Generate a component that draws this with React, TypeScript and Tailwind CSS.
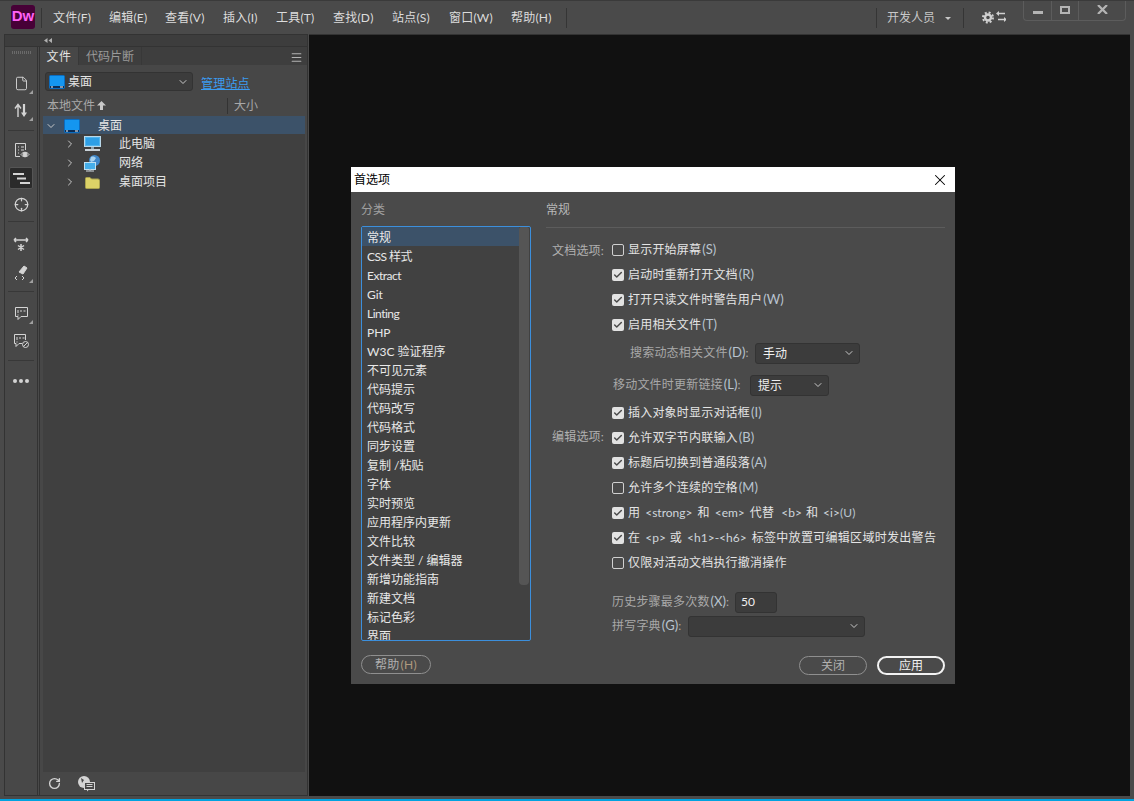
import { ChevronDown, ChevronRight, Menu, RotateCw, Check, X, Crosshair, File } from "lucide-react";

const FONT = "font-['Lato','Noto_Sans_CJK_SC',sans-serif]";
const menus: [string, string][] = [["文件(F)", "w-[56px]"], ["编辑(E)", "w-[56px]"], ["查看(V)", "w-[58px]"], ["插入(I)", "w-[53px]"], ["工具(T)", "w-[57px]"], ["查找(D)", "w-[59px]"], ["站点(S)", "w-[57px]"], ["窗口(W)", "w-[62px]"], ["帮助(H)", "w-[55px]"]];
const cats = ["常规", "CSS 样式", "Extract", "Git", "Linting", "PHP", "W3C 验证程序", "不可见元素", "代码提示", "代码改写", "代码格式", "同步设置", "复制 /粘贴", "字体", "实时预览", "应用程序内更新", "文件比较", "文件类型 / 编辑器", "新增功能指南", "新建文档", "标记色彩", "界面"];
const narrow = ["Extract", "Linting", "CSS 样式"];

function Corner() {
  return <span className="absolute right-0 bottom-0 w-0 h-0 border-l-[4px] border-b-[4px] border-l-transparent border-b-[#a0a0a0]" />;
}

function Tool({ children, corner, active }: { children: React.ReactNode; corner?: boolean; active?: boolean }) {
  return (
    <div className={`relative w-[24px] h-[22px] flex items-center justify-center rounded-[2px] text-[#d4d4d4] ${active ? "bg-[#2b2b2b] border border-[#555]" : ""}`}>
      {children}
      {corner && <Corner />}
    </div>
  );
}

function Desktop() {
  return (
    <svg width="16" height="14" viewBox="0 0 16 14">
      <rect x="0.5" y="0.5" width="15" height="13" rx="1" fill="#1496f0" stroke="#0b6cc0" />
      <rect x="1" y="11" width="14" height="2" fill="#0b2d55" />
      <rect x="2" y="11.5" width="2" height="1" fill="#fff" />
      <rect x="11" y="11.5" width="3" height="1" fill="#fff" />
    </svg>
  );
}

function Computer() {
  return (
    <svg width="17" height="16" viewBox="0 0 17 16">
      <rect x="0.5" y="0.5" width="16" height="10" fill="#4fb4ee" stroke="#b9d8ea" />
      <rect x="2" y="2" width="13" height="7" fill="#2e9fe6" />
      <rect x="7" y="11" width="3" height="2" fill="#8fa3b0" />
      <rect x="1" y="13" width="15" height="2" fill="#c9d2d8" />
    </svg>
  );
}

function Network() {
  return (
    <svg width="17" height="17" viewBox="0 0 17 17">
      <circle cx="10.5" cy="5.5" r="5.5" fill="#3f86c8" />
      <path d="M7 2c2-1 4 0 5 1l-2 3-3 1-1-2z" fill="#a8d3f0" />
      <rect x="0.5" y="7.5" width="11" height="7" fill="#45aeea" stroke="#bfe0f2" />
      <rect x="5" y="14.5" width="2" height="1" fill="#9fb2bf" />
      <rect x="2" y="15.5" width="8" height="1" fill="#d0d8dd" />
    </svg>
  );
}

function Folder() {
  return (
    <svg width="15" height="13" viewBox="0 0 15 13">
      <path d="M0.5 2.5a1 1 0 0 1 1-1H5l1.5 1.5h6.5a1.5 1.5 0 0 1 1.5 1.5v7a1 1 0 0 1-1 1h-12a1 1 0 0 1-1-1z" fill="#dcd267" stroke="#a9a24e" />
    </svg>
  );
}

function ArrowUp10() {
  return (
    <svg className="ml-[2px]" width="9" height="9" viewBox="0 0 9 9" fill="#c8c8c8"><path d="M4.5 0L9 4.5H6V9H3V4.5H0z" /></svg>
  );
}

function CheckRow({ checked, children, className = "" }: { checked: boolean; children: React.ReactNode; className?: string }) {
  return (
    <div className={`flex items-center h-[25px] ${className}`}>
      <span className={`w-[12px] h-[12px] rounded-[2px] flex items-center justify-center shrink-0 ${checked ? "bg-[#e2e2e2]" : "border border-[#d0d0d0]"}`}>
        {checked && <Check size={10} strokeWidth={3.5} className="text-[#4a4a4a]" />}
      </span>
      <span className="ml-[4px] text-[#e4e4e4] whitespace-nowrap tracking-[0.2px]">{children}</span>
    </div>
  );
}

function Hot({ k }: { k: string }) {
  return <span className="ml-[1px] text-[13px] leading-none tracking-normal text-[#b9c4cf]">({k})</span>;
}

function Tag({ children, className = "" }: { children: React.ReactNode; className?: string }) {
  return <span className={`text-[#cfd6dc] tracking-[0px] ${className}`}>{children}</span>;
}

function Select({ value, className }: { value: string; className: string }) {
  return (
    <div className={`h-[21px] rounded-[3px] bg-[#3c3c3c] border border-[#333] flex items-center justify-between pl-[7px] pr-[4px] text-[#f0f0f0] ${className}`}>
      <span className="pt-[2px]">{value}</span>
      <ChevronDown size={12} className="text-[#c8c8c8]" />
    </div>
  );
}

function Pill({ children, primary }: { children: React.ReactNode; primary?: boolean }) {
  return (
    <div className={`w-[68px] h-[19px] rounded-full flex items-center justify-center ${primary ? "border-2 border-[#f2f2f2] text-[#f2f2f2]" : "border border-[#8f8f8f] text-[#b0b0b0]"}`}>
      {children}
    </div>
  );
}

export default function App() {
  return (
    <div className={`relative w-[1134px] h-[801px] overflow-hidden bg-[#4a4a4a] text-[12px] flex flex-col ${FONT}`}>
      {/* title bar */}
      <div className="h-[34px] shrink-0 flex items-center border-t border-[#3a3a3a] relative">
        <div className="ml-[11px] mb-[2px] w-[24px] h-[24px] rounded-[3px] bg-[#470137] flex items-center justify-center text-[#ff61f6] font-bold text-[15px] font-['Liberation_Sans',sans-serif]">Dw</div>
        <div className="ml-[6px] w-px h-[20px] bg-[#353535]" />
        <div className="ml-[11px] flex text-[#dcdcdc]">
          {menus.map(([m, w]) => <span key={m} className={`${w} whitespace-nowrap tracking-[0.2px]`}>{m}</span>)}
        </div>
        <div className="w-px h-[20px] bg-[#353535]" />
        <div className="ml-[309px] w-px h-[20px] bg-[#353535]" />
        <span className="ml-[10px] text-[#c8c8c8] whitespace-nowrap">开发人员</span>
        <span className="ml-[10px] mt-[2px] w-0 h-0 border-x-[3px] border-t-[3px] border-x-transparent border-t-[#c8c8c8]" />
        <div className="ml-[12px] w-px h-[20px] bg-[#353535]" />
        <div className="ml-[18px] text-[#d0d0d0]">
          <svg width="24" height="13" viewBox="0 0 24 13" fill="none" stroke="currentColor">
            <circle cx="6" cy="6.5" r="3" strokeWidth="2.4" />
            <circle cx="6" cy="6.5" r="5" strokeWidth="2" strokeDasharray="2 1.93" />
            <path d="M16 2.5h7M23 8.5h-7" strokeWidth="1.5" />
            <path d="M17 0v5l-3-2.5zM22 6v5l3-2.5z" fill="currentColor" stroke="none" />
          </svg>
        </div>
        <div className="absolute top-0 left-[1023px] w-[103px] h-[20px] border border-t-0 border-[#5c5c5c] rounded-b-[4px] flex text-[#b4b4b4]">
          <div className="w-[28px] flex items-center justify-center border-r border-[#5c5c5c]"><span className="w-[10px] h-[3px] mt-[4px] bg-[#b4b4b4]" /></div>
          <div className="w-[27px] flex items-center justify-center border-r border-[#5c5c5c]"><span className="w-[10px] h-[8px] mb-[2px] border-2 border-[#b4b4b4]" /></div>
          <div className="flex-1 flex items-center justify-center">
            <svg width="11" height="9" viewBox="0 0 11 9" className="mb-[2px]" stroke="currentColor" strokeWidth="2.2"><path d="M1 0l9 9M10 0l-9 9" /></svg>
          </div>
        </div>
      </div>

      {/* body */}
      <div className="flex-1 flex min-h-0 pl-[4px] pr-[4px] pb-[3px]">
        <div className="w-[304px] shrink-0 flex flex-col border border-[#333]">
          <div className="h-[12px] shrink-0 bg-[#3d3d3d] border-b border-[#333] pl-[39px] flex items-center">
            <svg width="8" height="5" viewBox="0 0 8 5" fill="#b0b0b0"><path d="M3.5 0v5L0 2.5zM8 0v5L4.5 2.5z" /></svg>
          </div>
          <div className="flex-1 flex min-h-0">
            {/* toolbar */}
            <div className="w-[33px] shrink-0 bg-[#484848] border-r border-[#333] flex flex-col items-center pt-[4px]">
              <div className="w-[19px] h-[3px] bg-[repeating-linear-gradient(90deg,#6a6a6a_0,#6a6a6a_1px,transparent_1px,transparent_2px)]" />
              <div className="mt-[18px] flex flex-col items-center gap-[5px]">
                <Tool corner><File size={15} strokeWidth={1.5} /></Tool>
                <Tool corner>
                  <svg width="14" height="15" viewBox="0 0 14 15" fill="none" stroke="currentColor"><path d="M4 14V3M1 5.5l3-4 3 4" strokeWidth="1.4" /><path d="M10 1v11" strokeWidth="2.2" /><path d="M7 9.5h6l-3 4.5z" fill="currentColor" stroke="none" /></svg>
                </Tool>
              </div>
              <div className="mt-[9px] w-[26px] h-px bg-[#383838]" />
              <div className="mt-[8px] flex flex-col items-center gap-[6px]">
                <Tool>
                  <svg width="17" height="17" viewBox="0 0 17 17" fill="none" stroke="currentColor"><path d="M12.5 8V1.5h-10v13H7" /><path d="M5 5h1M8 5h3M5 8h1M8 8h3M5 11h1" /><circle cx="12" cy="12.5" r="2" fill="currentColor" /><path d="M8 12.5c2-3 6-3 8 0-2 3-6 3-8 0z" /></svg>
                </Tool>
                <Tool active>
                  <svg width="17" height="13" viewBox="0 0 17 13" fill="currentColor"><rect x="0" y="1" width="11" height="2" /><rect x="4" y="5.5" width="9" height="2" /><rect x="7" y="10" width="10" height="2" /></svg>
                </Tool>
                <div className="-mt-[2px]"><Tool><Crosshair size={15} /></Tool></div>
              </div>
              <div className="mt-[6px] w-[26px] h-px bg-[#383838]" />
              <div className="mt-[11px] flex flex-col items-center gap-[7px]">
                <Tool>
                  <svg width="16" height="16" viewBox="0 0 16 16" fill="none" stroke="currentColor" strokeWidth="1.5"><path d="M1 4h14M1 4l2-2M1 4l2 2M15 4l-2-2M15 4l-2 2" /><path d="M8 8v7M5 9.5l6 4M11 9.5l-6 4" /></svg>
                </Tool>
                <div className="-mt-[1px]"><Tool corner>
                  <svg width="16" height="17" viewBox="0 0 16 17" fill="none" stroke="currentColor"><path d="M6 8l5-6 3 2-4 6z" fill="currentColor" /><path d="M4 12l-2 2 2 2M9 12l2 2-2 2" /></svg>
                </Tool></div>
              </div>
              <div className="mt-[8px] w-[26px] h-px bg-[#383838]" />
              <div className="mt-[10px] flex flex-col items-center gap-[6px]">
                <Tool corner>
                  <svg width="15" height="15" viewBox="0 0 15 15" fill="none" stroke="currentColor"><path d="M1.5 1.5h12v9H7l-3 3v-3H1.5z" /><path d="M4 4v3M4 8.5v1M6 5h2M9.5 5h2" /></svg>
                </Tool>
                <Tool>
                  <svg width="17" height="16" viewBox="0 0 17 16" fill="none" stroke="currentColor"><path d="M9 10.5H6l-3 3v-3H1.5v-9h11V7" /><path d="M4 4v3M4 8.5v1M6 5h2M9.5 5h2" /><circle cx="12.5" cy="11.5" r="3" /><path d="M10.5 13.5l4-4" /></svg>
                </Tool>
              </div>
              <div className="mt-[8px] w-[26px] h-px bg-[#383838]" />
              <div className="mt-[18px] flex gap-[2px]">
                <span className="w-[4px] h-[4px] rounded-full bg-[#d4d4d4]" />
                <span className="w-[4px] h-[4px] rounded-full bg-[#d4d4d4]" />
                <span className="w-[4px] h-[4px] rounded-full bg-[#d4d4d4]" />
              </div>
            </div>
            {/* panel */}
            <div className="ml-[1px] flex-1 flex flex-col min-w-0 bg-[#474747] border-l border-[#333]">
              <div className="h-[18px] shrink-0 flex bg-[#3e3e3e] items-center">
                <div className="w-[39px] h-full bg-[#474747] pt-[2px] flex items-center justify-center text-[#e4e4e4] border-r border-[#383838] tracking-[0.6px]">文件</div>
                <div className="w-[63px] h-full pt-[2px] flex items-center justify-center text-[#9a9a9a] border-r border-[#383838]">代码片断</div>
                <div className="ml-auto mr-[4px] mt-[2px] text-[#b4b4b4]"><Menu size={13} /></div>
              </div>
              <div className="h-[26px] shrink-0 flex items-end pl-[5px]">
                <div className="w-[148px] h-[19px] rounded-[3px] bg-[#3c3c3c] border border-[#333] flex items-center pl-[3px] pr-[3px] text-[#e4e4e4]">
                  <Desktop />
                  <span className="ml-[3px]">桌面</span>
                  <ChevronDown size={12} className="ml-auto text-[#c8c8c8]" />
                </div>
                <span className="ml-[8px] mb-[-2px] text-[#3b9bf0] underline tracking-[0.2px]">管理站点</span>
              </div>
              <div className="h-[25px] pt-[4px] shrink-0 flex items-center pl-[7px] text-[#a8a8a8]">
                <span className="w-[180px] flex items-center">本地文件<ArrowUp10 /></span>
                <span className="w-px h-[16px] bg-[#333]" />
                <span className="ml-[6px]">大小</span>
              </div>
              <div className="flex-1 ml-[3px] mr-[2px] bg-[#404040] text-[#e4e4e4]">
                <div className="h-[18px] pt-[1px] bg-[#3c5269] flex items-center pl-[2px]">
                  <ChevronDown size={12} className="text-[#c8c8c8]" />
                  <span className="ml-[7px] flex"><Desktop /></span>
                  <span className="ml-[18px]">桌面</span>
                </div>
                {[["此电脑", <Computer key="c" />], ["网络", <Network key="n" />], ["桌面项目", <Folder key="f" />]].map(([t, ic], i) => (
                  <div key={i} className="h-[19px] pt-[1px] flex items-center pl-[21px]">
                    <ChevronRight size={12} className="text-[#c8c8c8]" />
                    <span className="ml-[8px] w-[17px] flex justify-center">{ic}</span>
                    <span className="ml-[18px]">{t}</span>
                  </div>
                ))}
              </div>
              <div className="h-[23px] shrink-0 flex items-center pl-[8px] text-[#d4d4d4]">
                <RotateCw size={13} strokeWidth={2.5} />
                <svg className="ml-[16px]" width="18" height="17" viewBox="0 0 18 17"><circle cx="7" cy="7" r="6" fill="#d4d4d4" /><path d="M4 3l3 2-2 3zM8 8l3 1-3 3z" fill="#474747" /><rect x="7.5" y="7.5" width="10" height="7" fill="#474747" stroke="#d4d4d4" /><path d="M9.5 9.5h6M9.5 11.5h6" stroke="#d4d4d4" /><path d="M10 14.5v2l2-2z" fill="#d4d4d4" /></svg>
              </div>
            </div>
          </div>
        </div>
        <div className="flex-1 bg-[#111111] border-t border-[#333] ml-[1px]" />
      </div>
      <div className="h-[2px] shrink-0 bg-[#00a3e0]" />

      {/* preferences dialog */}
      <div className="absolute left-[351px] top-[167px] w-[604px] h-[517px] bg-[#4a4a4a] flex flex-col">
        <div className="h-[25px] shrink-0 bg-white flex items-center pl-[3px] text-black">
          <span>首选项</span>
          <X size={18} strokeWidth={1.4} className="ml-auto mr-[6px]" />
        </div>
        <div className="flex flex-1 min-h-0">
          <div className="ml-[10px] w-[170px] shrink-0 flex flex-col">
            <div className="h-[34px] pt-[2px] shrink-0 flex items-center text-[#a0a0a0]">分类</div>
            <div className="h-[415px] shrink-0 rounded-[2px] border border-[#3c8fdc] bg-[#414141] overflow-hidden relative">
              {cats.map((c, i) => (
                <div key={c} className={`h-[19px] w-[157px] pt-[2px] flex items-center pl-[5px] text-[#e8e8e8] whitespace-nowrap ${i === 0 ? "bg-[#3c5269]" : ""} ${narrow.includes(c) ? "tracking-[-0.5px]" : ""}`}>{c}</div>
              ))}
              <div className="absolute right-[1px] top-0 w-[10px] h-[358px] rounded-b-[4px] rounded-t-[2px] bg-[#555555]" />
            </div>
            <div className="mt-[14px] w-[70px] h-[19px] rounded-full border border-[#8f8f8f] text-[#b0b0b0] flex items-center justify-center tracking-[0.3px]">帮助<span className="ml-[1px] text-[#b09a7e]">(H)</span></div>
          </div>
          <div className="ml-[15px] w-[399px] shrink-0 flex flex-col relative">
            <div className="h-[36px] shrink-0 flex items-center text-[#b8b8b8] border-b border-[#5c5c5c]">常规</div>
            <div className="mt-[9px] pl-[66px] relative">
              <span className="absolute left-[6px] top-[5px] text-[#b0b0b0] tracking-[0.2px]">文档选项:</span>
              <CheckRow checked={false}>显示开始屏幕<Hot k="S" /></CheckRow>
              <CheckRow checked>启动时重新打开文档<Hot k="R" /></CheckRow>
              <CheckRow checked>打开只读文件时警告用户<Hot k="W" /></CheckRow>
              <CheckRow checked>启用相关文件<Hot k="T" /></CheckRow>
              <div className="flex items-center h-[32px] -ml-[66px] pl-[84px] text-[#a8a8a8]">
                <span className="w-[119px] whitespace-nowrap tracking-[0.2px]">搜索动态相关文件<Hot k="D" />:</span>
                <Select value="手动" className="ml-[6px] w-[105px]" />
              </div>
              <div className="flex items-center h-[32px] -ml-[66px] pl-[67px] text-[#a8a8a8]">
                <span className="w-[131px] whitespace-nowrap tracking-[0.2px]">移动文件时更新链接<Hot k="L" />:</span>
                <Select value="提示" className="ml-[6px] w-[79px]" />
              </div>
              <CheckRow checked className="-mt-[1px]">插入对象时显示对话框<Hot k="I" /></CheckRow>
              <span className="absolute left-[6px] top-[191px] text-[#b0b0b0] tracking-[0.2px]">编辑选项:</span>
              <CheckRow checked>允许双字节内联输入<Hot k="B" /></CheckRow>
              <CheckRow checked>标题后切换到普通段落<Hot k="A" /></CheckRow>
              <CheckRow checked={false}>允许多个连续的空格<Hot k="M" /></CheckRow>
              <CheckRow checked>用<Tag className="ml-[5px]">&lt;strong&gt;</Tag><span className="ml-[5px]">和</span><Tag className="ml-[5px]">&lt;em&gt;</Tag><span className="ml-[5px]">代替</span><Tag className="ml-[7px]">&lt;b&gt;</Tag><span className="ml-[4px]">和</span><Tag className="ml-[5px]">&lt;i&gt;</Tag><span className="text-[#b9c4cf]">(U)</span></CheckRow>
              <CheckRow checked>在<Tag className="ml-[5px]">&lt;p&gt;</Tag><span className="ml-[4px]">或</span><Tag className="ml-[5px]">&lt;h1&gt;-&lt;h6&gt;</Tag><span className="ml-[5px] tracking-[0.3px]">标签中放置可编辑区域时发出警告</span></CheckRow>
              <CheckRow checked={false}>仅限对活动文档执行撤消操作</CheckRow>
              <div className="mt-[16px] flex items-center h-[22px] text-[#a8a8a8]">
                <span className="w-[117px] whitespace-nowrap tracking-[0.2px]">历史步骤最多次数<Hot k="X" />:</span>
                <div className="ml-[6px] w-[42px] h-[21px] rounded-[3px] bg-[#3c3c3c] border border-[#333] flex items-center pl-[5px] text-[#f0f0f0]">50</div>
              </div>
              <div className="mt-[2px] flex items-center h-[22px] text-[#a8a8a8]">
                <span className="w-[70px] whitespace-nowrap tracking-[0.2px]">拼写字典<Hot k="G" />:</span>
                <Select value="" className="ml-[6px] w-[177px]" />
              </div>
            </div>
            <div className="absolute right-0 bottom-[9px] flex gap-[10px]">
              <Pill>关闭</Pill>
              <Pill primary>应用</Pill>
            </div>
          </div>
        </div>
      </div>
    </div>
  );
}
